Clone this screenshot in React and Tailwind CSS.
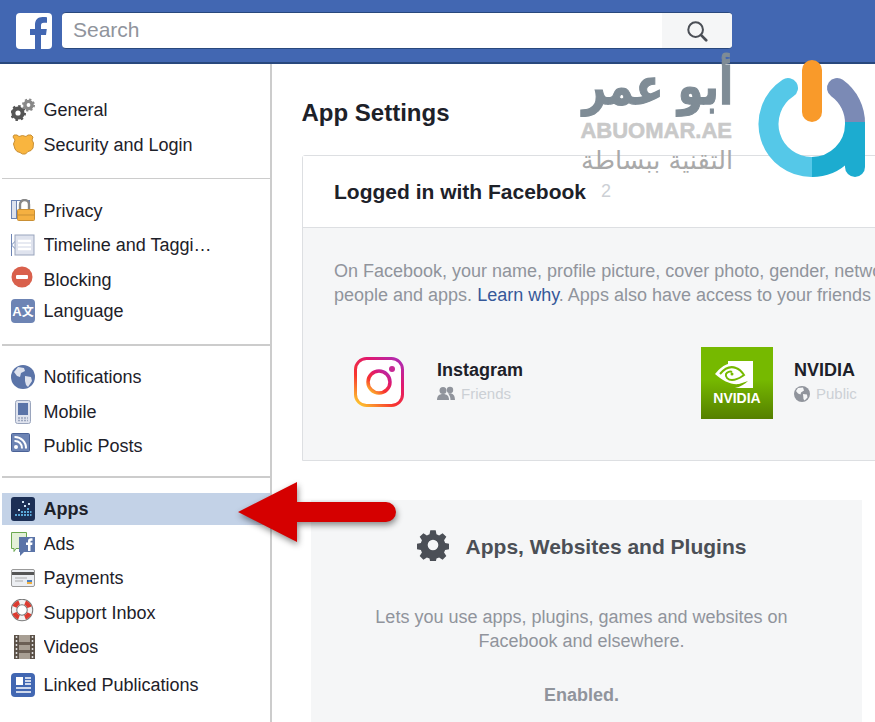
const Gears = () => (
  <svg viewBox="0 0 24 24" className="h-6 w-6">
    <circle cx="7" cy="15" r="4.6" fill="none" stroke="#555" strokeWidth="4" />
    <circle cx="7" cy="15" r="7" fill="none" stroke="#555" strokeWidth="2" strokeDasharray="2.500 3" />
    <circle cx="17.500" cy="7" r="3.600" fill="none" stroke="#888" strokeWidth="3.400" />
    <circle cx="17.500" cy="7" r="5.600" fill="none" stroke="#888" strokeWidth="1.800" strokeDasharray="2.200 2.200" />
  </svg>
);

const Shield = () => (
  <svg viewBox="0 0 24 24" className="h-6 w-6">
    <path d="M3 2h3l2 1.500 3.500-1 3.500 1L17 2h3l2 2-1 3 1.500 3-.500 5-2 2.500-3 1-2.500 2.500h-3L9 19.500l-3-1-2-2.500-1.500-5L4 7 2 4z" fill="#f9b53f" stroke="#c98f34" />
  </svg>
);

const Lock = () => (
  <svg viewBox="0 0 24 24" className="h-6 w-6">
    <rect x="0.500" y="1.500" width="18" height="18" fill="#fff" stroke="#6d84b4" />
    <rect x="0.500" y="1.500" width="5" height="18" fill="#dfe3ee" stroke="#6d84b4" />
    <path d="M9 11V5.500a4.500 4.500 0 0 1 9 0V11" fill="none" stroke="#888" strokeWidth="2.400" />
    <rect x="6.500" y="10.500" width="17" height="11" rx="1" fill="#f5b041" stroke="#c98f34" />
    <path d="M7 16h16" stroke="#c98f34" />
  </svg>
);

const Timeline = () => (
  <svg viewBox="0 0 24 24" className="h-6 w-6">
    <path d="M.500 1v22" stroke="#6d84b4" />
    <path d="M.500 12l4-4v8z" fill="#fff" stroke="#6d84b4" />
    <rect x="4" y="2" width="19" height="20" fill="#dfe3ee" stroke="#9aa5bd" />
    <path d="M7 8h13M7 12h13M7 16h13" stroke="#fff" strokeWidth="2.500" />
  </svg>
);

const Blocking = () => (
  <svg viewBox="0 0 24 24" className="-mt-1 h-6 w-6">
    <circle cx="11" cy="11" r="10.500" fill="#d9604c" />
    <rect x="5" y="9" width="12" height="4" rx="1" fill="#fff" />
  </svg>
);

const Language = () => (
  <div className="flex h-6 w-6 items-center justify-center rounded-sm bg-[#6d84b4] text-[13px] font-bold leading-none text-white">
    A<span className="font-['Noto_Sans_CJK_SC',sans-serif] text-[12px]">文</span>
  </div>
);

const Globe = () => (
  <svg viewBox="0 0 24 24" className="h-6 w-6">
    <circle cx="12" cy="12" r="12" fill="#5b74a8" />
    <path d="M7 2l6 1 1 3-4 2-1 4-3-1-3-4zM14 11l6 1 1 4-4 6-2-2-1-4z" fill="#dfe3ee" />
  </svg>
);

const Mobile = () => (
  <svg viewBox="0 0 24 24" className="h-6 w-6">
    <rect x="4.500" y="0.500" width="15" height="23" rx="2" fill="#dfe3ee" stroke="#9aa5bd" />
    <rect x="7" y="3" width="10" height="12" fill="#5b74a8" />
    <path d="M7 18h10M7 20.500h10" stroke="#9aa5bd" strokeWidth="1.500" strokeDasharray="2 1" />
  </svg>
);

const Rss = () => (
  <svg viewBox="0 0 24 24" className="-mt-2 h-6 w-6">
    <rect x="0.500" y="3.500" width="18" height="18" rx="1" fill="#6d84b4" stroke="#4a6297" />
    <circle cx="5" cy="17" r="2" fill="#fff" />
    <path d="M3.500 11a7 7 0 0 1 7.500 7.500M3.500 7a11 11 0 0 1 11.500 11.500" fill="none" stroke="#fff" strokeWidth="2" />
  </svg>
);

const Apps = () => (
  <svg viewBox="0 0 24 24" className="h-6 w-6">
    <rect width="24" height="24" rx="3" fill="#1c2f55" />
    <path d="M4 17h2v2H4zM7 17h2v2H7zM10 14h2v2h-2zM10 17h2v2h-2zM13 14h2v2h-2zM13 17h2v2h-2zM16 11h2v2h-2zM16 14h2v2h-2zM16 17h2v2h-2zM19 14h1.500v2H19zM19 17h1.500v2H19z" fill="#5aa7d8" />
    <path d="M11 4h2v2h-2zM7 12h2v2H7zM13 8h2v2h-2zM17 6h2v2h-2z" fill="#cfe3f5" />
  </svg>
);

const Ads = () => (
  <svg viewBox="0 0 24 24" className="h-6 w-6">
    <path d="M.500.500h15v16H5l-2 3v-3H.500z" fill="#e3f0d8" stroke="#6aa84f" />
    <path d="M8 5h16v15H13l-4 4v-4H8z" fill="#5b74a8" />
    <path d="M17 19v-6h-2v-2.500h2V9c0-2 1-2.800 3-2.800h1.500v2.500H20.500c-.700 0-1 .300-1 1v.800h2l-.300 2.500h-1.700v6z" fill="#fff" />
  </svg>
);

const Card = () => (
  <svg viewBox="0 0 24 24" className="h-6 w-6">
    <rect x="0.500" y="3.500" width="23" height="17" rx="1.500" fill="#eceef2" stroke="#999" />
    <rect x="1" y="6" width="22" height="3" fill="#555" />
    <path d="M4 12h12M4 15h8" stroke="#aaa" />
    <rect x="16" y="14" width="5" height="2" fill="#4a80c4" />
    <rect x="16" y="16" width="5" height="2" fill="#f0b040" />
  </svg>
);

const Ring = () => (
  <svg viewBox="0 0 24 24" className="-mt-1 h-6 w-6">
    <circle cx="11" cy="11" r="8" fill="none" stroke="#777" strokeWidth="6.500" />
    <circle cx="11" cy="11" r="8" fill="none" stroke="#f2f2f2" strokeWidth="4.500" />
    <circle cx="11" cy="11" r="8" fill="none" stroke="#dc3b30" strokeWidth="4.500" strokeDasharray="6.500 6.060" strokeDashoffset="3.250" transform="rotate(45 11 11)" />
  </svg>
);

const Film = () => (
  <svg viewBox="0 0 24 24" className="h-6 w-6">
    <rect x="3" y="0" width="21" height="24" fill="#a89f94" />
    <path d="M3 0h5v24H3zM19 0h5v24h-5z" fill="#5c5248" />
    <path d="M8 7h11v3H8zM8 15h11v3H8z" fill="#6b5f55" />
    <path d="M5.500 1v22M21.500 1v22" stroke="#ddd" strokeWidth="1.500" strokeDasharray="2 2" />
  </svg>
);

const Linked = () => (
  <svg viewBox="0 0 24 24" className="h-6 w-6">
    <rect width="24" height="24" rx="4" fill="#4267b2" />
    <rect x="5" y="4" width="7" height="8" fill="#fff" />
    <path d="M14 5h6M14 8h6M14 11h6M5 15h15M5 19h15" stroke="#fff" strokeWidth="1.500" />
  </svg>
);

const Row = ({ icon: Icon, label, height, active }) => (
  <div className={`flex items-center ${height} ${active ? "bg-[#c3d2e7] font-bold" : ""}`}>
    <div className="flex w-[41.5px] shrink-0 justify-end pr-[8.5px]">
      <Icon />
    </div>
    <span className="truncate">{label}</span>
  </div>
);

const groups = [
  {
    box: "pt-[29px] pb-[15px] border-b border-[#ccc]",
    rows: [
      { icon: Gears, label: "General", height: "h-[34px]" },
      { icon: Shield, label: "Security and Login", height: "h-9" },
    ],
  },
  {
    box: "pt-[15px] pb-5 border-b-2 border-[#ccc]",
    rows: [
      { icon: Lock, label: "Privacy", height: "h-[34px]" },
      { icon: Timeline, label: "Timeline and Taggi…", height: "h-[34px]" },
      { icon: Blocking, label: "Blocking", height: "h-9" },
      { icon: Language, label: "Language", height: "h-[26px]" },
    ],
  },
  {
    box: "pt-[14px] pb-[14px] border-b-2 border-[#ccc]",
    rows: [
      { icon: Globe, label: "Notifications", height: "h-[34px]" },
      { icon: Mobile, label: "Mobile", height: "h-9" },
      { icon: Rss, label: "Public Posts", height: "h-8" },
    ],
  },
  {
    box: "pt-[15px]",
    rows: [
      { icon: Apps, label: "Apps", height: "h-8", active: true },
      { icon: Ads, label: "Ads", height: "h-[38px]" },
      { icon: Card, label: "Payments", height: "h-[30px]" },
      { icon: Ring, label: "Support Inbox", height: "h-10" },
      { icon: Film, label: "Videos", height: "h-7" },
      { icon: Linked, label: "Linked Publications", height: "h-12" },
    ],
  },
];

const Header = () => (
  <header className="flex h-16 items-center gap-2.5 border-b-2 border-[#29487d] bg-[#4267b2] pl-4">
    <div className="h-9 w-9 overflow-hidden rounded-sm bg-white">
      <svg viewBox="0 0 36 36" className="h-9 w-9">
        <path d="M25 36V22h5l.800-6H25v-3.500c0-1.700.500-2.800 2.900-2.800H31V4.300C30.400 4.200 28.600 4 26.500 4 22 4 19 6.700 19 11.700V16h-5v6h5v14z" fill="#4267b2" />
      </svg>
    </div>
    <div className="-mt-px flex h-[37px] w-[670px] overflow-hidden rounded-sm border-b border-t border-[#29487d] bg-white">
      <div className="flex-1 pl-[11px] text-[21px] leading-[33px] text-[#90949c]">Search</div>
      <div className="flex w-[70px] items-center justify-center bg-[#f5f6f7]">
        <svg viewBox="0 0 24 24" className="h-[22px] w-[22px]" fill="none" stroke="#4b4f56">
          <circle cx="10.500" cy="10.500" r="8" strokeWidth="2.200" />
          <path d="M16.500 16.500L22 22" strokeWidth="3" strokeLinecap="round" />
        </svg>
      </div>
    </div>
  </header>
);

const Sidebar = () => (
  <aside className="w-[272px] shrink-0 border-r-2 border-[#ccc] pl-0.5 text-[18px] text-[#1d2129]">
    {groups.map((group) => (
      <div key={group.rows[0].label} className={group.box}>
        {group.rows.map((row) => (
          <Row key={row.label} {...row} />
        ))}
      </div>
    ))}
  </aside>
);

const Instagram = () => (
  <svg viewBox="0 0 50 50" className="h-[50px] w-[50px]">
    <defs>
      <linearGradient id="ig" x1="0.1" y1="1" x2="0.9" y2="0">
        <stop offset="0" stopColor="#fdc32e" />
        <stop offset="0.35" stopColor="#f8352e" />
        <stop offset="0.7" stopColor="#e0186f" />
        <stop offset="1" stopColor="#b02ab0" />
      </linearGradient>
    </defs>
    <rect x="1.500" y="1.500" width="47" height="47" rx="11" fill="#fff" stroke="url(#ig)" strokeWidth="3" />
    <circle cx="25" cy="25" r="11" fill="none" stroke="url(#ig)" strokeWidth="3.500" />
    <circle cx="38" cy="12" r="3" fill="#c72a94" />
  </svg>
);

const Nvidia = () => (
  <div className="flex h-[72px] w-[72px] flex-col items-center bg-gradient-to-b from-[#76b900] from-45% to-[#558000]">
    <svg viewBox="0 0 38 28" className="mr-[7px] mt-[14px] h-[28px] w-[38px]">
      <path d="M13 0h25v27H20c5-1 10-4 13-7l-9 3C16 24 8 20 0 13 5 7 9 4 13 3z" fill="#fff" />
      <path d="M5 13c5-6 11-8 16-6 3 1 6 4 8 7-3 2-6 5-12 5-4 0-7-3-6-6 1-2 4-3 6-2" fill="none" stroke="#76b900" strokeWidth="2" />
      <circle cx="17" cy="13" r="1.500" fill="#76b900" />
    </svg>
    <span className="mt-[2px] text-[14px] font-bold leading-[14px] text-white">NVIDIA</span>
  </div>
);

const FriendsIcon = () => (
  <svg viewBox="0 0 18 16" className="h-4 w-[18px]" fill="#90949c">
    <circle cx="6" cy="4.500" r="3.500" />
    <path d="M0 14c0-4 2-6 6-6s6 2 6 6z" />
    <circle cx="13" cy="4" r="3.200" />
    <path d="M11 7.500c4-1 7 1 7 6.500h-4.500c0-3-1-5-2.500-6.500z" />
  </svg>
);

const GlobeSmall = () => (
  <svg viewBox="0 0 16 16" className="h-4 w-4">
    <circle cx="8" cy="8" r="8" fill="#90949c" />
    <path d="M4 2l5-.500 1 3-3 2-.500 2L4 7.500 2 5zM9 8l4 .500.500 3-3 3-1-1.500z" fill="#f5f6f7" />
  </svg>
);

const AppText = ({ name, privacy, icon }) => (
  <div className="flex flex-col pt-[11px]">
    <span className="text-[18px] font-bold leading-6 text-[#1d2129]">{name}</span>
    <span className="flex items-center gap-[6px] text-[15px] leading-6 text-[#ccd0d5]">
      {icon}
      {privacy}
    </span>
  </div>
);

const LoginCard = () => (
  <section className="mt-[27px] h-[306px] w-[700px] rounded-tl-[3px] border border-[#dddfe2] bg-[#f5f6f7]">
    <div className="flex h-[72px] items-center border-b border-[#dddfe2] bg-white pl-[31px]">
      <span className="text-[21px] font-bold text-[#1d2129]">Logged in with Facebook</span>
      <span className="ml-[15px] text-[18px] text-[#ccd0d5]">2</span>
    </div>
    <p className="whitespace-nowrap pl-[31px] pt-[31px] text-[18px] leading-6 text-[#90949c]">
      On Facebook, your name, profile picture, cover photo, gender, networks, username
      <br />
      people and apps. <span className="text-[#365899]">Learn why</span>. Apps also have access to your friends list
    </p>
    <div className="flex items-start pl-[51px] pt-[40px]">
      <div className="flex w-[347px] items-start">
        <div className="mr-[33px] mt-[10px]">
          <Instagram />
        </div>
        <AppText name="Instagram" privacy="Friends" icon={<FriendsIcon />} />
      </div>
      <div className="flex items-start gap-[21px]">
        <Nvidia />
        <AppText name="NVIDIA" privacy="Public" icon={<GlobeSmall />} />
      </div>
    </div>
  </section>
);

const PluginsPanel = () => (
  <section className="ml-[9px] mt-[39px] h-[240px] w-[551px] bg-[#f5f6f7] pr-[10px] text-center text-[18px] leading-6 text-[#90949c]">
    <div className="flex items-center justify-center gap-[17px] pt-[29px]">
      <svg viewBox="0 0 24 24" className="h-8 w-8" fill="#4b4f56">
        <path fillRule="evenodd" d="M10 1h4l.600 3 2 .800 2.600-1.700 2.800 2.800-1.700 2.600.800 2 3 .600v4l-3 .600-.800 2 1.700 2.600-2.800 2.800-2.600-1.700-2 .800-.600 3h-4l-.600-3-2-.800-2.600 1.700-2.800-2.800 1.700-2.600-.800-2-3-.600v-4l3-.600.800-2-1.700-2.600 2.800-2.800 2.600 1.700 2-.800zM12 8a4 4 0 1 0 0 8 4 4 0 0 0 0-8z" />
      </svg>
      <span className="mt-[3px] text-[21px] font-bold text-[#4b4f56]">Apps, Websites and Plugins</span>
    </div>
    <p className="pt-[44px]">
      Lets you use apps, plugins, games and websites on
      <br />
      Facebook and elsewhere.
    </p>
    <p className="pt-[30px] font-bold">Enabled.</p>
  </section>
);

const Watermark = () => (
  <div className="absolute left-[560px] top-[55px] h-[130px] w-[315px]">
    <div className="absolute right-[142px] top-[2px] origin-right scale-y-125 whitespace-nowrap font-['DejaVu_Sans',sans-serif] text-[41px] font-bold leading-[58px] text-[#7f8c96] [-webkit-text-stroke:1px_#7f8c96]">أبو عمر</div>
    <div className="absolute right-[143px] top-[63px] whitespace-nowrap text-[22px] font-bold leading-[26px] text-[#c9c9c9] [-webkit-text-stroke:0.5px_#c9c9c9]">ABUOMAR.AE</div>
    <div className="absolute right-[142px] top-[90px] whitespace-nowrap font-['DejaVu_Sans',sans-serif] text-[25.5px] leading-[30px] text-[#a9a9a9]">التقنية ببساطة</div>
    <svg viewBox="750 55 125 130" className="absolute left-[190px] top-0 h-[130px] w-[125px]">
      <path d="M788 88A43 43 0 0 0 812 167" fill="none" stroke="#55c8e8" strokeWidth="20" strokeLinecap="round" />
      <path d="M837 88A43 43 0 0 1 855 124" fill="none" stroke="#7b8ab5" strokeWidth="20" strokeLinecap="round" />
      <path d="M855 122V124A43 43 0 0 1 812 167" fill="none" stroke="#1cacd0" strokeWidth="20" />
      <path d="M845 122h20v45a10 10 0 0 1-20 0z" fill="#1cacd0" />
      <rect x="802" y="60" width="20" height="62" rx="10" fill="#f99a2a" />
    </svg>
  </div>
);

const Arrow = () => (
  <svg viewBox="230 475 175 75" className="absolute left-[230px] top-[475px] h-[75px] w-[175px] drop-shadow-[1px_3px_3px_rgba(0,0,0,0.45)]">
    <path d="M238 512L297 482V502H386a10 10 0 0 1 0 20H297V542z" fill="#d50000" />
  </svg>
);

export default function App() {
  return (
    <div className="relative h-[722px] w-[875px] overflow-hidden bg-white font-['Liberation_Sans',sans-serif]">
      <Header />
      <div className="flex h-[658px]">
        <Sidebar />
        <main className="min-w-0 flex-1 pl-[30px] pt-[34px]">
          <h1 className="-ml-[0.5px] text-[24px] font-bold leading-[30px] text-[#1d2129]">App Settings</h1>
          <LoginCard />
          <PluginsPanel />
        </main>
      </div>
      <Watermark />
      <Arrow />
    </div>
  );
}
